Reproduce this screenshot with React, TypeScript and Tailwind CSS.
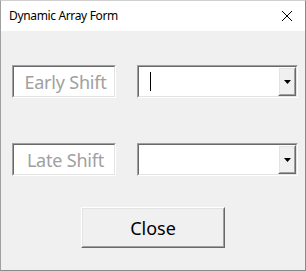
import React from "react";

function Sunken({ className, children }: { className?: string; children?: React.ReactNode }) {
  return (
    <div className={"border border-t-[#a0a0a0] border-l-[#a0a0a0] border-b-white border-r-white " + (className ?? "")}>
      <div className="w-full h-full border border-t-[#696969] border-l-[#696969] border-b-[#e3e3e3] border-r-[#e3e3e3] bg-white flex items-center">
        {children}
      </div>
    </div>
  );
}

function Raised({ className, children }: { className?: string; children?: React.ReactNode }) {
  return (
    <div className={"border border-t-white border-l-white border-b-[#696969] border-r-[#696969] " + (className ?? "")}>
      <div className="w-full h-full border border-t-[#e3e3e3] border-l-[#e3e3e3] border-b-[#a0a0a0] border-r-[#a0a0a0] bg-[#f0f0f0] flex items-center justify-center">
        {children}
      </div>
    </div>
  );
}

function Combo({ caret }: { caret?: boolean }) {
  return (
    <Sunken className="w-[161px] h-[33px]">
      <div className="flex-1 h-full flex items-center pl-[11px]">
        {caret && <div className="w-px h-[19px] bg-black" />}
      </div>
      <Raised className="w-[18px] h-full">
        <svg width="7" height="4" viewBox="0 0 7 4">
          <path d="M0 0H7L3.5 4Z" fill="#000" />
        </svg>
      </Raised>
    </Sunken>
  );
}

function Label({ text }: { text: string }) {
  return (
    <Sunken className="w-[104px] h-[33px]">
      <span className="w-full text-center text-[18px] text-[#a0a0a0] leading-none pl-[3px] tracking-[-0.2px]" style={{ fontFamily: '"Noto Sans", "Open Sans", sans-serif' }}>
        {text}
      </span>
    </Sunken>
  );
}

export default function App() {
  return (
    <div className="w-[306px] h-[271px] border border-[#8a8a8a] border-t-[#d0d0d0] border-l-[#a0a0a0] flex flex-col bg-[#f0f0f0]" style={{ fontFamily: '"Noto Sans", "Open Sans", sans-serif' }}>
      <div className="h-[30px] bg-white flex items-center justify-between pl-[8px] pr-[8px] shrink-0">
        <span className="text-[12px] tracking-[-0.35px] text-black">Dynamic Array Form</span>
        <svg width="12" height="12" viewBox="0 0 12 12" className="mr-[4px]">
          <path d="M1 1L11 11M11 1L1 11" stroke="#000" strokeWidth="1" />
        </svg>
      </div>
      <div className="flex-1 flex flex-col pt-[34px] pl-[11px]">
        <div className="flex items-center gap-[21px]">
          <Label text="Early Shift" />
          <Combo caret />
        </div>
        <div className="flex items-center gap-[21px] mt-[45px]">
          <Label text="Late Shift" />
          <Combo />
        </div>
        <div className="mt-[31px] pl-[69px]">
          <Raised className="w-[144px] h-[41px]">
            <span className="text-[18px] text-black leading-none">Close</span>
          </Raised>
        </div>
      </div>
    </div>
  );
}
